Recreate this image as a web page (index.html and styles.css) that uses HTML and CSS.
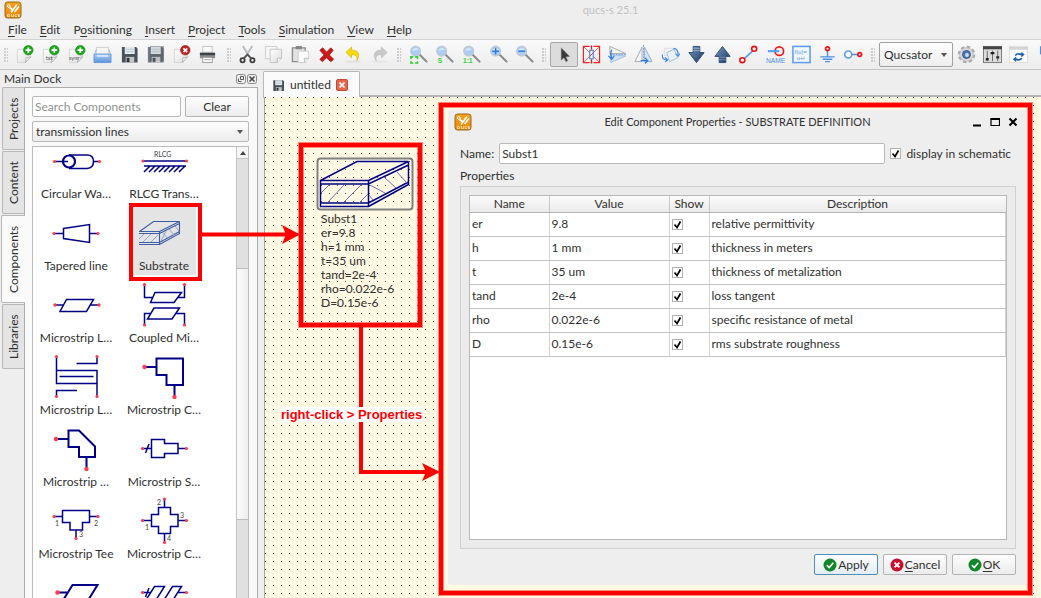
FILE: index.html
```html
<!DOCTYPE html>
<html lang="en">
<head>
<meta charset="utf-8">
<title>qucs-s 25.1</title>
<link rel="stylesheet" href="styles.css">
</head>
<body>
<svg class="defs" aria-hidden="true">
  <defs>
    <linearGradient id="orange" x1="0" y1="0" x2="0" y2="1"><stop offset="0" stop-color="#f9a11b"/><stop offset="1" stop-color="#ee8500"/></linearGradient>
    <linearGradient id="navyfade" x1="0" y1="0" x2="1" y2="1"><stop offset="0" stop-color="#7d9cc4"/><stop offset="1" stop-color="#15355f"/></linearGradient>
    <linearGradient id="paper" x1="0" y1="0" x2="1" y2="1"><stop offset="0" stop-color="#fff"/><stop offset="1" stop-color="#dcdcdc"/></linearGradient>
    <linearGradient id="tray" x1="0" y1="0" x2="0" y2="1"><stop offset="0" stop-color="#a9ccf5"/><stop offset="1" stop-color="#5b95dc"/></linearGradient>
    <symbol id="logo" viewBox="0 0 18 18"><rect x="1" y="1" width="16" height="16" rx="2.500" fill="url(#orange)" stroke="#9a6a20"/><path d="M5.500 6.500L9 9M7 11.500L13 3.500M10.500 11L15 5.500" stroke="#fff" stroke-width="1.600" fill="none"/><circle cx="4.800" cy="5" r="1.400" fill="none" stroke="#fff"/><path d="M3.500 13.500h2v2h-2ZM7.500 13v2.500h2V13M13 13.500h-2v2h2M15.500 13.500h-1.500v1h1.500v1h-1.500" stroke="#ffe9c8" stroke-width=".8" fill="none"/></symbol>
    <symbol id="page" viewBox="0 0 20 20"><path d="M2.500 4.500H16.500V12.500L11 18.500H2.500Z" fill="url(#paper)" stroke="#d4d4d4"/><path d="M16.500 12.500L11 18.500L11.500 13.500Z" fill="#eee" stroke="#aaa" stroke-width=".8"/></symbol>
    <symbol id="plus" viewBox="0 0 20 20"><circle cx="14" cy="5.500" r="5" fill="#18a818" stroke="#0b7d0b" stroke-width=".6"/><path d="M14 2.500V8.500M11 5.500H17" stroke="#fff" stroke-width="1.800"/></symbol>
    <symbol id="floppy" viewBox="0 0 20 20"><path d="M2 2H17L18.500 4V18.500H2Z" fill="#4a5058"/><rect x="5" y="2" width="10.500" height="7.500" fill="#e4e9ee"/><path d="M6 4.500h8.500M6 7h8.500" stroke="#bcc4cc"/><rect x="6" y="12.500" width="9" height="6" fill="#c2c6cb"/><rect x="7" y="13.500" width="3" height="4.500" fill="#30353b"/></symbol>
    <symbol id="lens" viewBox="0 0 20 20"><path d="M11 10L18.500 17.500" stroke="#8a8a8a" stroke-width="2.200" stroke-linecap="round"/><circle cx="7" cy="6.500" r="5.200" fill="#a9cdf4" stroke="#c4c9d0" stroke-width="1.300"/><path d="M3.500 6A3.800 3.800 0 0 1 10.500 5Z" fill="#d6e8fb"/></symbol>
    <symbol id="ok" viewBox="0 0 14 14"><circle cx="7" cy="7" r="6.500" fill="#11862a"/><path d="M3.800 7.200L6.200 9.500L10.300 4.800" fill="none" stroke="#fff" stroke-width="1.600"/></symbol>
    <symbol id="no" viewBox="0 0 14 14"><circle cx="7" cy="7" r="6.500" fill="#c8102e"/><path d="M4.600 4.600L9.400 9.400M9.400 4.600L4.600 9.400" stroke="#fff" stroke-width="1.900"/></symbol>
  </defs>
</svg>

<div class="app">
  <header class="titlebar">
    <svg class="app-logo" width="18" height="18"><use href="#logo"/></svg>
    <h1>qucs-s 25.1</h1>
  </header>

  <nav class="menubar" aria-label="Main menu">
    <button class="menu"><u>F</u>ile</button>
    <button class="menu"><u>E</u>dit</button>
    <button class="menu">P<u>o</u>sitioning</button>
    <button class="menu"><u>I</u>nsert</button>
    <button class="menu"><u>P</u>roject</button>
    <button class="menu"><u>T</u>ools</button>
    <button class="menu"><u>S</u>imulation</button>
    <button class="menu"><u>V</u>iew</button>
    <button class="menu"><u>H</u>elp</button>
  </nav>

  <div class="toolbar" role="toolbar" aria-label="Main toolbar">
    <div class="group group-file">
      <button aria-label="New"><svg viewBox="0 0 20 20"><use href="#page"/><use href="#plus"/></svg></button>
      <button aria-label="New text"><svg viewBox="0 0 20 20"><use href="#page"/><use href="#plus"/><text x="5" y="16" class="tiny">txt</text></svg></button>
      <button aria-label="New symbol"><svg viewBox="0 0 20 20"><use href="#page"/><use href="#plus"/><text x="2" y="16" class="tiny">sym</text></svg></button>
      <button aria-label="Open"><svg viewBox="0 0 20 20"><path d="M3.500 2.500H16.500V11H3.500Z" fill="#f4f4f4" stroke="#ccc"/><path d="M1 9.500H19V18.500H1Z" fill="url(#tray)" stroke="#5a90d2" stroke-width=".8"/><path d="M1.500 9.500L3.500 5M18.500 9.500L16.500 5" stroke="#8fb6e6"/><path d="M4 11.500H16" stroke="#d4e7fc" stroke-width="2"/></svg></button>
      <button aria-label="Save"><svg viewBox="0 0 20 20"><use href="#floppy"/></svg></button>
      <button aria-label="Save all"><svg viewBox="0 0 20 20"><path d="M4 1H19V17H4Z" fill="#a4a9b0"/><g opacity=".75"><use href="#floppy"/></g></svg></button>
      <button aria-label="Close"><svg viewBox="0 0 20 20"><use href="#page"/><circle cx="14" cy="5.500" r="5" fill="#c42222" stroke="#8f1212" stroke-width=".6"/><path d="M12 3.500L16 7.500M16 3.500L12 7.500" stroke="#fff" stroke-width="1.700"/></svg></button>
      <button aria-label="Print"><svg viewBox="0 0 20 20"><rect x="5" y="1.500" width="10" height="6" fill="#fafafa" stroke="#c4c4c4"/><path d="M2 8H18V14H2Z" fill="#8a8e92"/><path d="M2 9.500H18" stroke="#404346" stroke-width="2.500"/><rect x="5" y="13" width="10" height="5.500" fill="#fff" stroke="#999"/><path d="M6.500 15.500H13.500" stroke="#999"/></svg></button>
    </div>
    <div class="group group-edit">
      <button aria-label="Cut"><svg viewBox="0 0 20 20"><path d="M5 1L13 14M15 1L7 14" stroke="#b8bcc0" stroke-width="2"/><circle cx="4.800" cy="16" r="2.200" fill="none" stroke="#3c3c3c" stroke-width="1.900"/><circle cx="15.200" cy="16" r="2.200" fill="none" stroke="#3c3c3c" stroke-width="1.900"/><path d="M6 14L10 10L14 14" stroke="#555" stroke-width="1.900" fill="none"/></svg></button>
      <button aria-label="Copy"><svg viewBox="0 0 20 20"><path d="M1.500 1.500H13.500V14.500H1.500Z" fill="#f6f6f6" stroke="#ccc"/><path d="M6.500 4.500H18.500V14L14 18.500H6.500Z" fill="url(#paper)" stroke="#c4c4c4"/><path d="M18.500 14H14V18.500" fill="#fff" stroke="#bbb"/></svg></button>
      <button aria-label="Paste"><svg viewBox="0 0 20 20"><path d="M1.500 3H15V17.500H1.500Z" fill="#e2e2e2" stroke="#8a8a8a" stroke-width="1.400"/><rect x="5" y="1" width="6.500" height="3.500" fill="#888"/><path d="M7.500 6.500H18.500V14L14 18.500H7.500Z" fill="#fbfbfb" stroke="#d0d0d0"/><path d="M18.500 14H14V18.500" fill="#eee" stroke="#bbb"/></svg></button>
      <button aria-label="Delete"><svg viewBox="0 0 20 20"><path d="M3 5.500L6 3L10 7.500L14.500 3L17 5.500L13 10.500L17.500 15L14.500 17.500L10 13.500L5.500 17.500L3 15L7.500 10.500Z" fill="#d01818" stroke="#9a0d0d" stroke-width=".8"/></svg></button>
      <button aria-label="Undo"><svg viewBox="0 0 20 20"><ellipse cx="10" cy="17.500" rx="8" ry="1.500" fill="#e2e2e2"/><path d="M8 2V5.500C14 5 18 9 13.500 16.500C14.500 12 12.500 10 8 10.200V13.500L2 7.800Z" fill="#f4d90c" stroke="#d6b400" stroke-width=".7"/></svg></button>
      <button aria-label="Redo"><svg viewBox="0 0 20 20"><ellipse cx="10" cy="17.500" rx="8" ry="1.500" fill="#e6e6e6"/><path d="M12 2V5.500C6 5 2 9 6.500 16.500C5.500 12 7.500 10 12 10.200V13.500L18 7.800Z" fill="#c9c9c9" stroke="#b9b9b9" stroke-width=".7"/></svg></button>
    </div>
    <div class="group group-zoom">
      <button aria-label="Zoom fit"><svg viewBox="0 0 20 20"><use href="#lens"/><path d="M2 15V12.500H4.500M6.500 12.500H9V15M9 17V19H6.500M4.500 19H2V17" fill="none" stroke="#2ed02e" stroke-width="1.600"/></svg></button>
      <button aria-label="Zoom selection"><svg viewBox="0 0 20 20"><use href="#lens"/><text x="3" y="18.500" class="zoom-tag">S</text></svg></button>
      <button aria-label="Zoom 1:1"><svg viewBox="0 0 20 20"><use href="#lens"/><text x="1" y="18.500" class="zoom-tag">1:1</text></svg></button>
      <button aria-label="Zoom in"><svg viewBox="0 0 20 20"><use href="#lens"/><path d="M7 3V10M3.500 6.500H10.500" stroke="#2b78e0" stroke-width="1.500"/></svg></button>
      <button aria-label="Zoom out"><svg viewBox="0 0 20 20"><use href="#lens"/><path d="M3.500 6.500H10.500" stroke="#2b78e0" stroke-width="1.500"/></svg></button>
    </div>
    <div class="group group-place">
      <button class="pressed" aria-label="Select"><svg viewBox="0 0 20 20"><path d="M6.500 3L15.500 12L11.500 12.500L13.500 16.500L11.500 17.500L9.500 13.500L6.500 16Z" fill="#3a3a3a" stroke="#888" stroke-width=".5"/></svg></button>
      <button aria-label="Deactivate"><svg viewBox="0 0 20 20"><path d="M8 1.500H1.500V18.500H8M12 1.500H18.500V18.500H12" fill="none" stroke="#f02020" stroke-width="1.200"/><path d="M2 2L18 18M18 2L2 18" stroke="#f06060" stroke-width="1"/><path d="M10 .5V5M10 15V19.500" stroke="#d02020" stroke-width="1.400"/><path d="M8.200 5.500H11.800V14.500H8.200Z" fill="#fff" stroke="#3e86e8" stroke-width="1.200"/><path d="M8 12L12 8" stroke="#f03030"/></svg></button>
      <button aria-label="Mirror X"><svg viewBox="0 0 20 20"><path d="M2 1.500L18.500 9H2Z" fill="#f3f3f3" stroke="#aaa"/><path d="M3 10.500L18.500 11.500L3 18.500Z" fill="#cfe1f5" stroke="#8fb0d8" stroke-width=".8"/><path d="M2 10H19" stroke="#6da4ec" stroke-dasharray="2 1"/><path d="M4 5C2.500 8 2.500 11 4 14M.5 11.500L4 15L6.500 11.500" stroke="#2b78e0" fill="none" stroke-width="1.300"/></svg></button>
      <button aria-label="Mirror Y"><svg viewBox="0 0 20 20"><path d="M8.500 2V17.500H1Z" fill="#f3f3f3" stroke="#aaa"/><path d="M11 2V17.500H19Z" fill="#cfe1f5" stroke="#9ab0cc"/><path d="M10 0V18" stroke="#6da4ec" stroke-dasharray="2 1"/><path d="M7 16.500H14M11.500 13.500L14.500 16.500L11.500 19.500" stroke="#2b78e0" fill="none" stroke-width="1.300"/></svg></button>
      <button aria-label="Rotate"><svg viewBox="0 0 20 20"><path d="M3.500 3.500H12V11H3.500Z" fill="#f2f2f2" stroke="#ddd"/><path d="M6 8L14 4.500L17.500 13.500L9 17.500Z" fill="#e8f0fa" stroke="#a4bbd8"/><path d="M1.500 10C1 14 3 16 6 15.500M4 13L7 15.500L4.500 18M13 3.500C16 3.500 18 6 18 10M15.500 9L18 12L20 9" stroke="#3e86e8" fill="none" stroke-width="1.200"/></svg></button>
      <button aria-label="Into subcircuit"><svg viewBox="0 0 20 20"><path d="M6.500 1.500H13.500V8H18L10 18.500L2 8H6.500Z" fill="url(#navyfade)" stroke="#2c4a74"/><path d="M6.500 3.500H13.500M6.500 6H13.500" stroke="#8fabc9"/></svg></button>
      <button aria-label="Pop out"><svg viewBox="0 0 20 20"><path d="M6.500 18.500H13.500V12H18L10 1.500L2 12H6.500Z" fill="url(#navyfade)" stroke="#2c4a74"/><path d="M6.500 15.500H13.500M6.500 13H13.500" stroke="#6d8db2"/></svg></button>
      <button aria-label="Wire"><svg viewBox="0 0 20 20"><path d="M4 16L16 4.500" stroke="#5a9cf0" stroke-width="1.800"/><circle cx="3.500" cy="16" r="2.600" fill="#fff" stroke="#f01010" stroke-width="1.700"/><circle cx="16" cy="4" r="2.600" fill="#fff" stroke="#f01010" stroke-width="1.700"/></svg></button>
      <button aria-label="Wire label"><svg viewBox="0 0 20 20"><circle cx="14" cy="6.500" r="4.500" fill="none" stroke="#f01818" stroke-width="1.800"/><path d="M2 6.500H14" stroke="#5a9cf0" stroke-width="2.200"/><text x="0" y="19" class="name-tag">NAME</text></svg></button>
      <button aria-label="Equation"><svg viewBox="0 0 20 20"><rect x="1" y="1.500" width="18" height="17" fill="#f2f7fe" stroke="#5a9cf0" stroke-width="1.600"/><text x="3" y="9" class="eq-tag">f(u)=</text><text x="5" y="16" class="eq-tag">u+i</text></svg></button>
      <button aria-label="Ground"><svg viewBox="0 0 20 20"><path d="M10 6V12M2.500 12.500H17.500M5 15H15M7.500 17.500H12.500" stroke="#4a90ea" stroke-width="1.500"/><circle cx="10" cy="4" r="2" fill="#fff" stroke="#f01010" stroke-width="1.800"/></svg></button>
      <button aria-label="Port"><svg viewBox="0 0 20 20"><path d="M8 10H15" stroke="#4a90ea" stroke-width="1.600"/><circle cx="4.500" cy="10" r="3.700" fill="#fff" stroke="#5a9cf0" stroke-width="1.700"/><circle cx="16.500" cy="10" r="2" fill="#fff" stroke="#f01010" stroke-width="1.800"/></svg></button>
    </div>
    <div class="group group-sim">
      <select class="simulator" aria-label="Simulator"><option>Qucsator</option></select>
      <button aria-label="Simulate"><svg viewBox="0 0 20 20"><circle cx="10" cy="10" r="7.800" fill="none" stroke="#a8a8a8" stroke-width="2.800" stroke-dasharray="3.600 2.520"/><circle cx="10" cy="10" r="7.200" fill="#d9d9d9" stroke="#b4b4b4" stroke-width=".8"/><circle cx="10" cy="10" r="4.200" fill="#4a78b8" stroke="#3a5680"/><circle cx="10.500" cy="10.500" r="2" fill="#c9dcf4"/></svg></button>
      <button aria-label="Tuner"><svg viewBox="0 0 20 20"><rect x=".5" y="1.500" width="19" height="17" fill="#dcdcdc" stroke="#777"/><path d="M0 3H20" stroke="#444" stroke-width="3"/><path d="M4.500 6V17M10 6V17M15.500 6V17" stroke="#666"/><path d="M3 15H6M8 8.500H12M14 13H17" stroke="#222" stroke-width="2.400"/></svg></button>
      <button aria-label="Data display"><svg viewBox="0 0 20 20"><rect x=".5" y="1.500" width="19" height="17" fill="#fbfbfb" stroke="#dedede"/><path d="M0 3.500H20" stroke="#d4d4d4" stroke-width="3"/><path d="M6 11C7 8 11 8 13 9V7L16.500 10L13 13V11C10 10 8 10 7.500 11.500ZM14 14C13 17 9 17 7.500 16V18L4 15L7.500 12V14C10 15 12 15 12.500 13.500Z" fill="#1d62b8"/></svg></button>
      <button aria-label="Marker"><svg viewBox="0 0 20 20"><path d="M6 2V9L12 14V2Z" fill="#cfe0fa" stroke="#4a90ea" stroke-width="1.600"/></svg></button>
    </div>
  </div>

  <div class="workspace">
    <aside class="dock">
      <div class="dock-head">
        <h2>Main Dock</h2>
        <button aria-label="Float"><svg width="10" height="10"><rect x=".5" y=".5" width="9" height="9" rx="2" fill="none" stroke="#888"/><path d="M4.500 2.500H7.500V5.500H4.500ZM2.500 4.500V7.500H5.500" fill="none" stroke="#555"/></svg></button>
        <button aria-label="Close dock"><svg width="10" height="10"><rect x=".5" y=".5" width="9" height="9" rx="2" fill="none" stroke="#888"/><path d="M2.500 2.500L7.500 7.500M7.500 2.500L2.500 7.500" stroke="#444" stroke-width="1.500"/></svg></button>
      </div>
      <div class="dock-body">
        <div class="side-tabs" role="tablist">
          <button role="tab" class="side-tab">Projects</button>
          <button role="tab" class="side-tab">Content</button>
          <button role="tab" class="side-tab active" aria-selected="true">Components</button>
          <button role="tab" class="side-tab">Libraries</button>
        </div>
        <div class="panel">
          <div class="search-row">
            <input type="text" placeholder="Search Components" aria-label="Search Components">
            <button class="push">Clear</button>
          </div>
          <select class="category" aria-label="Component category"><option>transmission lines</option></select>
          <div class="list-box">
            <ul class="parts">
              <li class="part"><svg viewBox="0 0 64 48"><g class="w"><path d="M11 24.500H24M49 24.500H55"/><path d="M25 18H43Q49.500 18 49.500 24.500T43 31.500H25"/><circle cx="25" cy="24.500" r="6" stroke-width="2.200"/></g><g class="p"><circle cx="10.500" cy="24.500" r="1.600"/><circle cx="55.500" cy="24.500" r="1.600"/></g></svg><span>Circular Wa…</span></li>
              <li class="part"><svg viewBox="0 0 64 48"><text x="22" y="20" class="pin">RLCG</text><g class="w"><path d="M11 24H54M12 29H54M18 29L12 35M23 29L17 35M28 29L22 35M33 29L27 35M38 29L32 35M43 29L37 35M48 29L42 35M53 29L47 35"/></g><g class="p"><circle cx="11" cy="24" r="1.600"/><circle cx="54.500" cy="24" r="1.600"/></g></svg><span>RLCG Trans…</span></li>
              <li class="part"><svg viewBox="0 0 64 48"><g class="w"><path d="M10 24.500H19.500M45.500 24.500H54M19.500 19.500L45.500 15.500V33.500L19.500 29.500Z"/></g><g class="p"><circle cx="10" cy="24.500" r="1.600"/><circle cx="54" cy="24.500" r="1.600"/></g></svg><span>Tapered line</span></li>
              <li class="part selected"><svg viewBox="0 0 64 48"><g fill="none" stroke="#3c5ca8" stroke-width="1.100"><path d="M7.500 22.500L21.500 12.500H47.500L27.500 22.500M7 22.500H27.500V35.500H7M7 24.500H27.500M7 33.500H27.500L47.500 22.500M27.500 24.500L47.500 14.500M27.500 35.500L47.500 24.500V12.500"/><path d="M7 30L12 25M11 33L19 25M19 33L26 26M31 23.500L35 29M37 20L42 26M43 17L47 22M29 32L34 22" stroke="#7f93c8" stroke-width=".8"/></g></svg><span>Substrate</span></li>
              <li class="part"><svg viewBox="0 0 64 48"><g class="w"><path d="M11 24H19.500M46 24H55M22.500 18.500H49.500L42.500 30.500H16Z"/></g><g class="p"><circle cx="11" cy="24" r="1.700"/><circle cx="55" cy="24" r="1.700"/></g></svg><span>Microstrip L…</span></li>
              <li class="part"><svg viewBox="0 0 64 48"><g class="w"><path d="M12.500 4V16.500H20M52.500 4V16.500H46M23 11.500H49.500L42 21.500H18.500ZM22 27H47.500L40 38H15.500ZM12.500 44V32.500H19M52.500 44V32.500H44"/></g><g class="p"><circle cx="12.500" cy="3.500" r="1.600"/><circle cx="52.500" cy="3.500" r="1.600"/><circle cx="12.500" cy="44" r="1.600"/><circle cx="52.500" cy="44" r="1.600"/></g></svg><span>Coupled Mi…</span></li>
              <li class="part"><svg viewBox="0 0 64 48"><g class="w"><path d="M12.500 4V30.500H53M12.500 17.500H53V43.500M53 4V10.500H32.500M15.500 23.500H49.500M12.500 43.500V37.500H33"/></g><g class="p"><circle cx="12.500" cy="3.500" r="1.600"/><circle cx="53" cy="3.500" r="1.600"/><circle cx="12.500" cy="43.500" r="1.600"/><circle cx="53" cy="43.500" r="1.600"/></g></svg><span>Microstrip L…</span></li>
              <li class="part"><svg viewBox="0 0 64 48"><g class="w b"><path d="M12.500 14H24.500M42.500 32V44M24.500 5.500H51V32H34.500V22H24.500Z"/></g><g class="p"><circle cx="12.500" cy="14" r="2.200"/><circle cx="42.500" cy="44" r="2.200"/></g></svg><span>Microstrip C…</span></li>
              <li class="part"><svg viewBox="0 0 64 48"><g class="w b"><path d="M12 14H24.500M42.500 32V44M24.500 5.500H35L51 21.500V32H35V22H24.500Z"/></g><g class="p"><circle cx="12" cy="14" r="2.200"/><circle cx="42.500" cy="44" r="2.200"/></g></svg><span>Microstrip …</span></li>
              <li class="part"><svg viewBox="0 0 64 48"><g class="w"><path d="M10.500 23.500H19.500M46 23.500H54.500M13.500 28L17 19M19.500 14.500H32.500V18.500H46V28.500H32.500V32.500H19.500Z"/></g><g class="p"><circle cx="10.500" cy="23.500" r="1.600"/><circle cx="54.500" cy="23.500" r="1.600"/></g></svg><span>Microstrip S…</span></li>
              <li class="part"><svg viewBox="0 0 64 48"><g class="w"><path d="M10 19.500H18.500M45.500 19.500H54M32 33V41M18.500 13.500H45.500V25.500H38.500V33H26V25.500H18.500Z"/></g><g class="p"><circle cx="10" cy="19.500" r="1.600"/><circle cx="54" cy="19.500" r="1.600"/><circle cx="32" cy="41.500" r="1.600"/></g><text x="11" y="29" class="pin">1</text><text x="50" y="29" class="pin">2</text><text x="35" y="40" class="pin">3</text></svg><span>Microstrip Tee</span></li>
              <li class="part"><svg viewBox="0 0 64 48"><g class="w"><path d="M10.500 23.500H19.500M46 23.500H54.500M32.500 2V10.500M32.500 36.500V45M26.500 10.500H38.500V17.500H46V29.500H38.500V36.500H26.500V29.500H19.500V17.500H26.500Z"/></g><g class="p"><circle cx="10.500" cy="23.500" r="1.600"/><circle cx="54.500" cy="23.500" r="1.600"/><circle cx="32.500" cy="2" r="1.600"/><circle cx="32.500" cy="45.500" r="1.600"/></g><text x="13" y="33" class="pin">1</text><text x="25" y="8" class="pin">2</text><text x="48" y="21" class="pin">3</text><text x="35" y="44" class="pin">4</text></svg><span>Microstrip C…</span></li>
              <li class="part"><svg viewBox="0 0 64 48"><g class="w b"><path d="M13.500 23.500H24M28.500 16H53.500L43 33H18Z"/></g><g class="p"><circle cx="13.500" cy="23.500" r="2.200"/></g></svg><span></span></li>
              <li class="part"><svg viewBox="0 0 64 48"><g class="w"><path d="M10.500 23.500H19M46 23.500H54.500M13.500 28L17 19M22.500 17.500H32.500L24 31H14ZM40.500 17.500H49.500L41 31H32Z"/></g><g class="p"><circle cx="10.500" cy="23.500" r="1.600"/><circle cx="54.500" cy="23.500" r="1.600"/></g></svg><span></span></li>
            </ul>
            <div class="scrollbar" aria-hidden="true">
              <div class="scroll-up"><svg width="6" height="4"><path d="M0 4L3 0L6 4Z" fill="#444"/></svg></div>
              <div class="scroll-before"></div>
              <div class="scroll-thumb"></div>
              <div class="scroll-after"></div>
            </div>
          </div>
        </div>
      </div>
    </aside>

    <main class="editor">
      <div class="doc-tabs" role="tablist">
        <div class="doc-tab" role="tab" aria-selected="true">
          <svg width="13" height="13"><use href="#floppy"/></svg>
          <span>untitled</span>
          <button aria-label="Close untitled"><svg width="12" height="12"><rect x=".5" y=".5" width="11" height="11" rx="1.500" fill="#e2684e" stroke="#c24a34"/><path d="M3.500 3.500L8.500 8.500M8.500 3.500L3.500 8.500" stroke="#fff" stroke-width="1.700"/></svg></button>
        </div>
      </div>
      <div class="sheet">
        <div class="component">
          <svg width="98" height="55"><rect x="1.500" y="1.500" width="95" height="51" rx="3" fill="none" stroke="#808080" stroke-width="2"/><g fill="none" stroke="#000087" stroke-width="1.500"><path d="M4.500 23.500L41 4.500H92.500L52.500 23.500M4.500 23.500H52.500V49.500H4.500ZM4.500 27H52.500L92.500 8M4.500 46H52.500L92.500 25M52.500 49.500L92.500 27.500V4.500"/></g><g stroke="#7070b8" fill="none"><path d="M5 36L13 28M12 45L28 28M28 45L45 28M43 46L52 37M53 38L57 43M54 28L69 36M68 20L80 31M80 14L91 26"/></g></svg>
          <p>Subst1<br>er=9.8<br>h=1 mm<br>t=35 um<br>tand=2e-4<br>rho=0.022e-6<br>D=0.15e-6</p>
        </div>

        <div class="dialog-frame">
          <section class="dialog" role="dialog" aria-labelledby="dialog-title">
            <header class="dialog-bar">
              <svg width="18" height="18"><use href="#logo"/></svg>
              <h2 id="dialog-title">Edit Component Properties - SUBSTRATE DEFINITION</h2>
              <div class="window-controls">
                <button aria-label="Minimize"><svg width="10" height="10"><path d="M1 8.500H9" stroke="#000" stroke-width="2"/></svg></button>
                <button aria-label="Maximize"><svg width="10" height="10"><path d="M1 2H9.500V8.500H1Z" fill="none" stroke="#000" stroke-width="1.200"/><path d="M.5 2H10" stroke="#000" stroke-width="2"/></svg></button>
                <button aria-label="Close"><svg width="10" height="10"><path d="M1.500 1.500L8.500 8.500M8.500 1.500L1.500 8.500" stroke="#000" stroke-width="2"/></svg></button>
              </div>
            </header>
            <div class="name-row">
              <label for="comp-name">Name:</label>
              <input id="comp-name" type="text" value="Subst1">
              <input id="show-name" type="checkbox" checked>
              <label for="show-name">display in schematic</label>
            </div>
            <h3>Properties</h3>
            <div class="group-box">
              <div class="table-box">
                <table>
                  <colgroup><col class="c-name"><col class="c-value"><col class="c-show"><col></colgroup>
                  <thead><tr><th>Name</th><th>Value</th><th>Show</th><th>Description</th></tr></thead>
                  <tbody>
                    <tr><td>er</td><td>9.8</td><td><input type="checkbox" checked aria-label="Show er"></td><td>relative permittivity</td></tr>
                    <tr><td>h</td><td>1 mm</td><td><input type="checkbox" checked aria-label="Show h"></td><td>thickness in meters</td></tr>
                    <tr><td>t</td><td>35 um</td><td><input type="checkbox" checked aria-label="Show t"></td><td>thickness of metalization</td></tr>
                    <tr><td>tand</td><td>2e-4</td><td><input type="checkbox" checked aria-label="Show tand"></td><td>loss tangent</td></tr>
                    <tr><td>rho</td><td>0.022e-6</td><td><input type="checkbox" checked aria-label="Show rho"></td><td>specific resistance of metal</td></tr>
                    <tr><td>D</td><td>0.15e-6</td><td><input type="checkbox" checked aria-label="Show D"></td><td>rms substrate roughness</td></tr>
                  </tbody>
                </table>
              </div>
            </div>
            <footer class="actions">
              <button class="push default"><svg width="14" height="14"><use href="#ok"/></svg><span>Apply</span></button>
              <button class="push"><svg width="14" height="14"><use href="#no"/></svg><span><u>C</u>ancel</span></button>
              <button class="push"><svg width="14" height="14"><use href="#ok"/></svg><span><u>O</u>K</span></button>
            </footer>
          </section>
        </div>
      </div>
    </main>

    <svg class="callouts" width="440" height="420" aria-hidden="true">
      <g fill="none" stroke="#ff0000">
        <g stroke-width="6" opacity=".45"><rect x="301" y="75" width="119" height="180"/></g>
        <g stroke-width="4"><rect x="131" y="135" width="69" height="74"/><rect x="301" y="75" width="119" height="180"/><path d="M202 164.500H286M361 256V402H426"/></g>
      </g>
      <path d="M300 164.500L282 155L286 164.500L282 174ZM440 402L422 393L426 402L422 411Z" fill="#ff0000"/>
    </svg>
    <p class="callout-text">right-click &gt; Properties</p>
  </div>
</div>
</body>
</html>
```
FILE: styles.css
```css
* { box-sizing: border-box; }

html, body { height: 100%; }

body {
  margin: 0;
  overflow: hidden;
  background: #eeeeee;
  color: #303030;
  font: 12px/16px Lato, "Noto Sans", sans-serif;
}

h1, h2, h3, p, ul { margin: 0; padding: 0; font-size: inherit; font-weight: normal; }
ul { list-style: none; }
button, input, select { margin: 0; font: inherit; color: inherit; }
button { padding: 0; border: 0; background: none; }
u { text-underline-offset: 2px; }
svg { display: block; flex: none; }

.defs { position: absolute; width: 0; height: 0; }

.app { display: flex; flex-direction: column; height: 100%; }

/* Title bar and menu */
.titlebar { display: flex; align-items: center; height: 19px; padding-left: 4px; flex: none; }
.titlebar h1 { flex: 1; text-align: center; color: #c2c2c2; padding-left: 158px; font-size: 11px; }
.menubar { display: flex; gap: 13px; height: 20px; padding-left: 8px; align-items: center; flex: none; }
.menu { line-height: 16px; padding-top: 2px; }

/* Toolbar */
.toolbar {
  display: flex;
  flex: none;
  height: 31px;
  overflow: hidden;
  border-top: 1px solid #d2d2d2;
  border-bottom: 1px solid #c6c6c6;
  background: linear-gradient(#fafafa, #ececec);
}
.group { display: flex; flex: none; align-items: center; padding-left: 11px; position: relative; }
.group::before {
  content: "";
  position: absolute;
  left: 4px;
  top: 8px;
  width: 4px;
  height: 14px;
  background-image: radial-gradient(circle at 1px 1px, #cccccc 1px, transparent 1px);
  background-size: 3px 3px;
}
.group button { flex: 1; height: 25px; display: flex; align-items: center; justify-content: center; }
.group button svg { width: 19px; height: 19px; }
.group .pressed { border: 1px solid #a6a6a6; border-radius: 2px; background: #dcdcdc; }
.group-file { width: 223px; padding-right: 2px; }
.group-edit { width: 170px; }
.group-zoom { width: 145px; padding-left: 12px; }
.group-place { width: 329px; padding-left: 12px; }
.group-sim { width: 186px; padding-left: 12px; }
.group-sim button { flex: 0 0 26px; }
.tiny { font-size: 6px; fill: #555; }
.zoom-tag { font: bold 7px "Liberation Sans", sans-serif; fill: #2ed02e; }
.name-tag { font: 7px "Liberation Sans", sans-serif; fill: #4a90ea; }
.eq-tag { font: 6px "Liberation Sans", sans-serif; fill: #4a90ea; }

select {
  appearance: none;
  border: 1px solid #b8b8b8;
  border-radius: 2px;
  background: url("data:image/svg+xml,%3Csvg xmlns='http://www.w3.org/2000/svg' width='6' height='4'%3E%3Cpath d='M0 0H6L3 4Z' fill='%23555'/%3E%3C/svg%3E") no-repeat right 5px center, linear-gradient(#fdfdfd, #ededed);
}
.simulator { flex: none; width: 74px; height: 25px; padding: 0 4px; border-color: #a0a0a0; }

/* Dock */
.workspace { position: relative; display: flex; flex: 1; min-height: 0; }
.dock { display: flex; flex-direction: column; width: 264px; flex: none; padding-right: 6px; }
.dock-head { display: flex; align-items: center; gap: 1px; height: 17px; padding: 0 1px 0 4px; flex: none; }
.dock-head h2 { flex: 1; }
.dock-body { display: flex; flex: 1; min-height: 0; }
.side-tabs { position: relative; display: flex; flex-direction: column; width: 24px; flex: none; padding-left: 2px; gap: 1px; }
.side-tab {
  writing-mode: vertical-rl;
  transform: rotate(180deg);
  height: 63px;
  flex: none;
  line-height: 22px;
  text-align: center;
  border: 1px solid #b8b8b8;
  border-left: 0;
  border-radius: 0 2px 2px 0;
  background: #e4e4e4;
}
.side-tab:last-child { height: 65px; }
.side-tab.active { height: 88px; margin-left: -1px; margin-right: -1px; background: #fafafa; }
.panel {
  display: flex;
  flex-direction: column;
  gap: 4px;
  flex: 1;
  min-width: 0;
  padding: 8px 8px 0 7px;
  border: 1px solid #acacac;
  border-bottom: 0;
  background: #f9f9f9;
}
.search-row { display: flex; gap: 4px; }
input[type="text"] {
  min-width: 0;
  flex: 1;
  height: 21px;
  padding: 0 2px;
  border: 1px solid #b8b8b8;
  border-radius: 2px;
  background: #ffffff;
}
input::placeholder { color: #909090; opacity: 1; }
.push {
  display: flex;
  align-items: center;
  justify-content: center;
  gap: 1px;
  width: 64px;
  height: 21px;
  border: 1px solid #b4b4b4;
  border-radius: 2px;
  background: linear-gradient(#fdfdfd, #ececec);
}
.category { height: 21px; padding: 0 3px; flex: none; }
.list-box {
  display: flex;
  flex: 1;
  min-height: 0;
  overflow: hidden;
  border: 1px solid #bcbcbc;
  border-bottom: 0;
  background: #ffffff;
}
.parts {
  display: grid;
  grid-template-columns: 86px 90px;
  grid-template-rows: 56px;
  grid-auto-rows: 72px;
  flex: 1;
}
.part { display: flex; flex-direction: column; align-items: center; justify-content: flex-end; white-space: nowrap; }
.part svg { width: 64px; height: 48px; }
.part span { height: 18px; line-height: 18px; }
.part.selected { margin: 4px 13px 0; background: #e4e4e4; }
.w { fill: none; stroke: #000087; stroke-width: 1.5; }
.w.b { stroke-width: 2; }
.p { fill: #ff3b4e; }
.pin { font-size: 7px; fill: #444; }

.scrollbar { display: flex; flex-direction: column; width: 12px; flex: none; border-left: 1px solid #c4c4c4; background: #e0e0e0; }
.scroll-up { height: 12px; flex: none; display: flex; align-items: center; justify-content: center; background: #f6f6f6; border-bottom: 1px solid #c4c4c4; }
.scroll-before { flex: 109; }
.scroll-thumb { flex: 251; background: linear-gradient(90deg, #fcfcfc, #eeeeee); border: solid #bcbcbc; border-width: 1px 0; }
.scroll-after { flex: 78; }

/* Editor */
.editor { display: flex; flex-direction: column; flex: 1; min-width: 0; }
.doc-tabs { height: 27px; flex: none; border-bottom: 2px solid #b4b4b4; }
.doc-tab {
  display: flex;
  align-items: center;
  gap: 5px;
  width: 97px;
  height: 27px;
  margin-left: -1px;
  margin-top: 1px;
  padding-left: 8px;
  border: 1px solid #b8b8b8;
  border-bottom: 0;
  border-radius: 2px 2px 0 0;
  background: #fafafa;
}
.sheet {
  position: relative;
  flex: 1;
  min-height: 0;
  border-left: 1px solid #a8a8a8;
  background: url("data:image/svg+xml,%3Csvg xmlns='http://www.w3.org/2000/svg' width='8' height='8'%3E%3Crect width='1' height='1' fill='%23555550'/%3E%3C/svg%3E") #fff9e3;
}
.component { position: absolute; left: 51px; top: 60px; }
.component p { padding: 0 0 0 5px; line-height: 14px; }

.dialog-frame {
  position: absolute;
  inset: 6px 9px 3px 174px;
  padding: 3px 1px 6px 5px;
  border: 4px solid #ff0000;
  box-shadow: 0 0 0 1px rgba(255, 0, 0, 0.45), inset 0 0 0 1px rgba(255, 0, 0, 0.45);
  background: #fff9e3;
}
.dialog { display: flex; flex-direction: column; height: 100%; padding: 0 11px 10px 12px; border-radius: 3px; background: #eeeeee; }
.dialog-bar { display: flex; align-items: center; height: 23px; margin: 0 -2px 0 -6px; flex: none; }
.dialog-bar h2 { flex: 1; font-size: 11px; text-align: center; padding-left: 31px; }
.window-controls { display: flex; gap: 8px; }
.name-row { display: flex; align-items: center; gap: 5px; margin-top: 10px; padding-right: 5px; }
.dialog h3 { margin-top: 4px; }
.group-box { display: flex; flex: 1; min-height: 0; margin-top: 2px; padding: 8px; border: 1px solid #d0d0d0; background: #ebebeb; }
.table-box { flex: 1; border: 1px solid #b8b8b8; background: #ffffff; }

input[type="checkbox"] {
  appearance: none;
  display: block;
  width: 11px;
  height: 11px;
  border: 1px solid #b0b0b0;
  background: #ffffff url("data:image/svg+xml,%3Csvg xmlns='http://www.w3.org/2000/svg' width='9' height='9'%3E%3Cpath d='M1.500 4.500L4 7.500L7.500 1.500' fill='none' stroke='%23000' stroke-width='1.700'/%3E%3C/svg%3E") no-repeat center;
}

table { width: 100%; border-collapse: collapse; table-layout: fixed; }
.c-name { width: 79px; }
.c-value { width: 120px; }
.c-show { width: 40px; }
th { height: 16px; line-height: 15px; padding: 0; font-weight: normal; border-right: 1px solid #c8c8c8; border-bottom: 1px solid #b4b4b4; background: linear-gradient(#fbfbfb, #eaeaea); }
td { height: 24px; padding: 0 2px; border-right: 1px solid #d4d4d4; border-bottom: 1px solid #c4c4c4; }
th:last-child { border-right: 0; }

.actions { display: flex; justify-content: flex-end; gap: 5px; margin-top: 5px; }
.default { border-color: #4d8fb5; background: linear-gradient(#fdfdfd, #e3edf3); }

/* Callouts drawn over the window */
.callouts { position: absolute; left: 0; top: 0; pointer-events: none; }
.callout-text {
  position: absolute;
  left: 281px;
  top: 337px;
  background: #ffffff;
  color: #ff0000;
  font: bold 13px/15px "Liberation Sans", sans-serif;
  white-space: nowrap;
}
```
